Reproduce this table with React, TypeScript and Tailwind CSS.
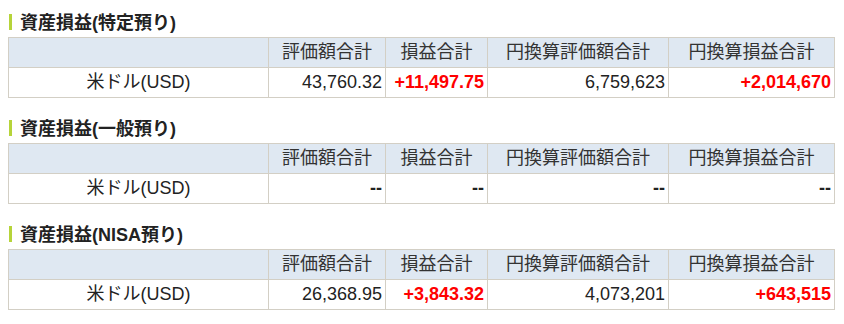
const headers = ["評価額合計", "損益合計", "円換算評価額合計", "円換算損益合計"];

type Section = {
  title: string;
  values: [string, string, string, string];
};

const sections: Section[] = [
  { title: "資産損益(特定預り)", values: ["43,760.32", "+11,497.75", "6,759,623", "+2,014,670"] },
  { title: "資産損益(一般預り)", values: ["--", "--", "--", "--"] },
  { title: "資産損益(NISA預り)", values: ["26,368.95", "+3,843.32", "4,073,201", "+643,515"] },
];

function AssetTable({ section }: { section: Section }) {
  const [val, gain, yenVal, yenGain] = section.values;
  const empty = val === "--";
  const numCls = "border border-[#d3cfc5] text-right pr-[3px] h-[30px]";
  const redCls = empty ? "font-bold text-[#222]" : "font-bold text-[#ff0000]";
  return (
    <div className="pt-[11px]">
      <div className="flex h-[24px] items-start">
        <span className="mt-[3px] ml-[1px] w-[3px] h-[16px] bg-[#b6d43a]" />
        <h2 className="ml-[8px] text-[18px] leading-[24px] font-bold text-[#222]">{section.title}</h2>
      </div>
      <table className="mt-[2px] table-fixed border-collapse w-[826px] text-[18px]">
        <colgroup>
          <col className="w-[260px]" />
          <col className="w-[117px]" />
          <col className="w-[102px]" />
          <col className="w-[181px]" />
          <col className="w-[166px]" />
        </colgroup>
        <thead>
          <tr className="bg-[#dfe8f2]">
            <th className="border border-[#d3cfc5] h-[30px]" />
            {headers.map((h) => (
              <th key={h} className="border border-[#d3cfc5] h-[30px] font-normal text-[#333] text-center">
                {h}
              </th>
            ))}
          </tr>
        </thead>
        <tbody>
          <tr className="bg-white text-[#222]">
            <td className="border border-[#d3cfc5] h-[30px] text-center">米ドル(USD)</td>
            <td className={`${numCls} ${empty ? "font-bold" : ""}`}>{val}</td>
            <td className={`${numCls} ${redCls}`}>{gain}</td>
            <td className={`${numCls} ${empty ? "font-bold" : ""}`}>{yenVal}</td>
            <td className={`${numCls} ${redCls}`}>{yenGain}</td>
          </tr>
        </tbody>
      </table>
    </div>
  );
}

export default function App() {
  return (
    <div
      className="w-[844px] h-[324px] bg-white pl-[8px] flex flex-col gap-[8px]"
      style={{ fontFamily: '"Liberation Sans", "Noto Sans CJK JP", sans-serif' }}
    >
      {sections.map((s) => (
        <AssetTable key={s.title} section={s} />
      ))}
    </div>
  );
}
